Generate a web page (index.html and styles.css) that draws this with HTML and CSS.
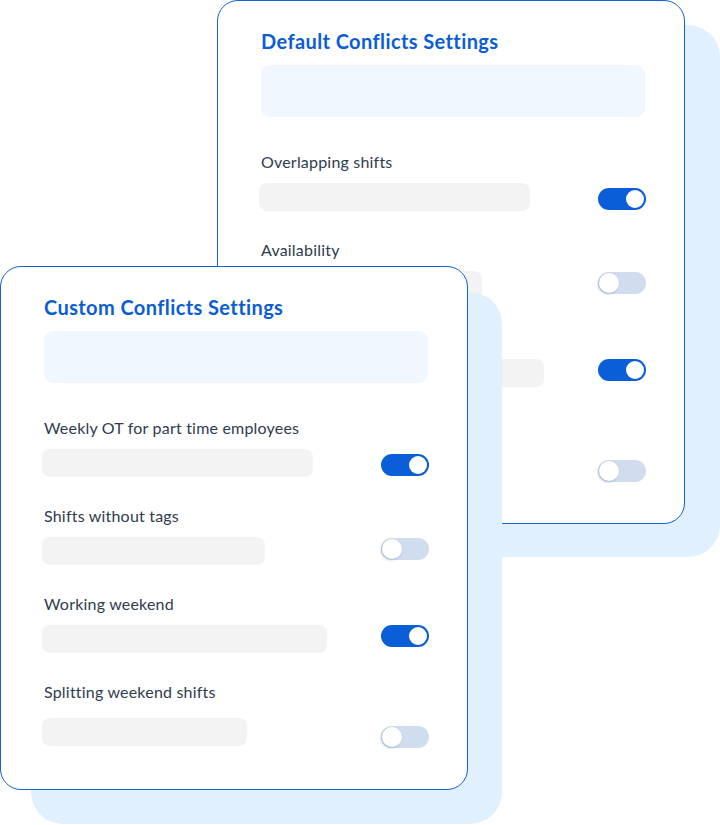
FILE: index.html
```html
<!DOCTYPE html>
<html lang="en">
<head>
<meta charset="utf-8">
<title>Conflicts Settings</title>
<link rel="stylesheet" href="styles.css">
</head>
<body>
<div class="stage">
  <div class="backdrop backdrop-default"></div>
  <section class="card card-default">
    <h2 class="card-title">Default Conflicts Settings</h2>
    <div class="card-banner"></div>
    <div class="setting">
      <p class="setting-label">Overlapping shifts</p>
      <div class="setting-line">
        <span class="bar bar-w1"></span>
        <span class="toggle toggle-on nudge-1"></span>
      </div>
    </div>
    <div class="setting">
      <p class="setting-label">Availability</p>
      <div class="setting-line">
        <span class="bar bar-w2"></span>
        <span class="toggle nudge-2"></span>
      </div>
    </div>
    <div class="setting">
      <p class="setting-label"></p>
      <div class="setting-line">
        <span class="bar bar-w3"></span>
        <span class="toggle toggle-on nudge-3"></span>
      </div>
    </div>
    <div class="setting setting-last">
      <p class="setting-label"></p>
      <div class="setting-line">
        <span class="bar bar-w4"></span>
        <span class="toggle nudge-4"></span>
      </div>
    </div>
  </section>

  <div class="backdrop backdrop-custom"></div>
  <section class="card card-custom">
    <h2 class="card-title">Custom Conflicts Settings</h2>
    <div class="card-banner"></div>
    <div class="setting">
      <p class="setting-label">Weekly OT for part time employees</p>
      <div class="setting-line">
        <span class="bar bar-w1"></span>
        <span class="toggle toggle-on nudge-1"></span>
      </div>
    </div>
    <div class="setting">
      <p class="setting-label">Shifts without tags</p>
      <div class="setting-line">
        <span class="bar bar-w2"></span>
        <span class="toggle nudge-2"></span>
      </div>
    </div>
    <div class="setting">
      <p class="setting-label">Working weekend</p>
      <div class="setting-line">
        <span class="bar bar-w3"></span>
        <span class="toggle toggle-on nudge-3"></span>
      </div>
    </div>
    <div class="setting setting-last">
      <p class="setting-label">Splitting weekend shifts</p>
      <div class="setting-line">
        <span class="bar bar-w4"></span>
        <span class="toggle nudge-4"></span>
      </div>
    </div>
  </section>
</div>
</body>
</html>
```

FILE: styles.css
```css
* {
  box-sizing: border-box;
}

html,
body {
  margin: 0;
  padding: 0;
  background: #ffffff;
}

body {
  font-family: Lato, "Noto Sans", "Open Sans", sans-serif;
  color: #2f3b4e;
}

/* free canvas holding the two overlapping setting windows */
.stage {
  position: relative;
  width: 720px;
  height: 825px;
  overflow: hidden;
}

/* pale blue plates sitting behind each window */
.backdrop {
  position: absolute;
  width: 471px;
  height: 532px;
  border-radius: 32px;
  background: #e1f0fe;
}

.backdrop-default {
  left: 249px;
  top: 25px;
}

.backdrop-custom {
  left: 31px;
  top: 292px;
}

.card {
  position: absolute;
  width: 468px;
  height: 524px;
  padding: 28px 38px 0 41px;
  background: #ffffff;
  border: 1px solid #1462d6;
  border-radius: 21px;
  display: flex;
  flex-direction: column;
}

.card-default {
  left: 217px;
  top: 0;
}

.card-custom {
  left: 0;
  top: 266px;
}

.card-title {
  margin: 0 0 0 2px;
  height: 24px;
  line-height: 24px;
  font-size: 20px;
  font-weight: 700;
  letter-spacing: 0.4px;
  color: #0a5dd3;
  white-space: nowrap;
}

.card-banner {
  margin: 12px 0 0 2px;
  width: 384px;
  height: 52px;
  border-radius: 9px;
  background: #f0f7ff;
}

.setting {
  margin-top: 35px;
  display: flex;
  flex-direction: column;
}

.setting + .setting {
  margin-top: 29px;
}

.setting-label {
  margin: 0 0 0 2px;
  height: 20px;
  line-height: 20px;
  font-size: 16px;
  font-weight: 400;
  letter-spacing: 0.2px;
  color: #2f3b4e;
  white-space: nowrap;
}

.setting-line {
  margin-top: 11px;
  height: 28px;
  display: flex;
  align-items: center;
  justify-content: space-between;
}

.setting-last .setting-line {
  margin-top: 16px;
}

.bar {
  display: block;
  height: 28px;
  border-radius: 8px;
  background: #f3f3f3;
}

.bar-w1 { width: 271px; }
.bar-w2 { width: 223px; }
.bar-w3 { width: 285px; }
.bar-w4 { width: 205px; }

/* switch: track with a round knob */
.toggle {
  position: relative;
  display: block;
  flex: none;
  width: 48px;
  height: 22px;
  border-radius: 11px;
  background: #d0ddef;
}

.toggle::after {
  content: "";
  position: absolute;
  top: 1px;
  left: 1px;
  width: 20px;
  height: 20px;
  border-radius: 50%;
  background: #ffffff;
  box-shadow: -1px 1px 3px rgba(70, 90, 120, 0.35);
}

.toggle-on {
  background: #0a5ed7;
}

.toggle-on::after {
  top: 2px;
  left: auto;
  right: 2px;
  width: 18px;
  height: 18px;
  box-shadow: none;
}

.nudge-1 { margin-top: 4px; }
.nudge-2 { margin-top: -4px; }
.nudge-3 { margin-top: -6px; }
.nudge-4 { margin-top: 9px; }
```
